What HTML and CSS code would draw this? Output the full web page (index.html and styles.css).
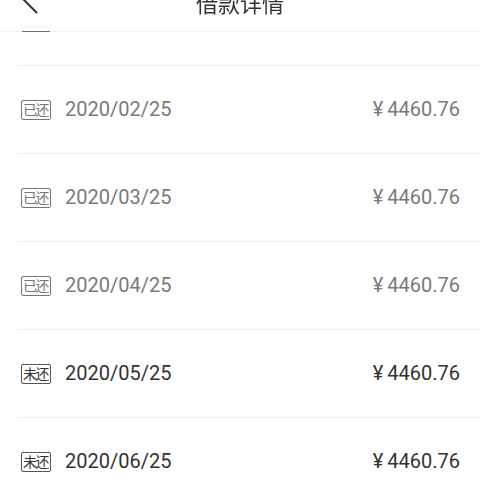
FILE: index.html
```html
<html>
<head>
    <title>借款详情</title>
    <meta charset="utf-8">
    <link rel="stylesheet" href="styles.css">
</head>
<body>
    <div class="header">
        <svg class="back" width="16" height="30" viewBox="0 0 16 30">
            <polyline points="15,1 1,15 15,29" fill="none" stroke="#333" stroke-width="2"/>
        </svg>
        <div class="title">借款详情</div>
    </div>
    <ul class="plan">
        <li class="row paid"><span class="tag">已还</span><span class="date">2020/01/25</span><span class="amount"><i>¥</i>4460.76</span></li>
        <li class="row paid"><span class="tag">已还</span><span class="date">2020/02/25</span><span class="amount"><i>¥</i>4460.76</span></li>
        <li class="row paid"><span class="tag">已还</span><span class="date">2020/03/25</span><span class="amount"><i>¥</i>4460.76</span></li>
        <li class="row paid"><span class="tag">已还</span><span class="date">2020/04/25</span><span class="amount"><i>¥</i>4460.76</span></li>
        <li class="row"><span class="tag">未还</span><span class="date">2020/05/25</span><span class="amount"><i>¥</i>4460.76</span></li>
        <li class="row"><span class="tag">未还</span><span class="date">2020/06/25</span><span class="amount"><i>¥</i>4460.76</span></li>
    </ul>
</body>
</html>
```
FILE: styles.css
```css
html, body { margin: 0; padding: 0; background: #fff; overflow: hidden; }
body { font-family: Roboto, "Noto Sans CJK SC", sans-serif; color: #333; }

.header { position: fixed; top: 0; left: 0; right: 0; height: 31px; background: #fff; z-index: 10; display: flex; justify-content: center; align-items: flex-start; box-shadow: 0 1px 0 rgba(0,0,0,0.05); overflow: hidden; }
.back { position: absolute; left: 22px; top: -16px; }
.title { font-size: 22px; line-height: 22px; margin-top: -9px; font-family: "Noto Sans CJK SC", sans-serif; }

.plan { list-style: none; margin: -22px 0 0 18px; padding: 0; }
.row { box-sizing: border-box; display: flex; align-items: center; height: 88px; border-bottom: 1px solid #eee; padding: 0 20px 2px 3px; font-size: 20px; }
.tag { box-sizing: border-box; width: 30px; height: 20px; margin-top: 3px; border: 1.5px solid #555; border-radius: 2px; font-size: 14px; line-height: 17px; text-align: center; font-family: "Noto Sans CJK SC", sans-serif; color: #333; letter-spacing: -1.5px; text-indent: -1px; }
.date { margin-left: 14px; flex: 1; }
.amount i { font-style: normal; margin-right: 4px; }

.paid { color: #7a7a7a; }
.paid .tag { border-color: #777; color: #777; }
```
